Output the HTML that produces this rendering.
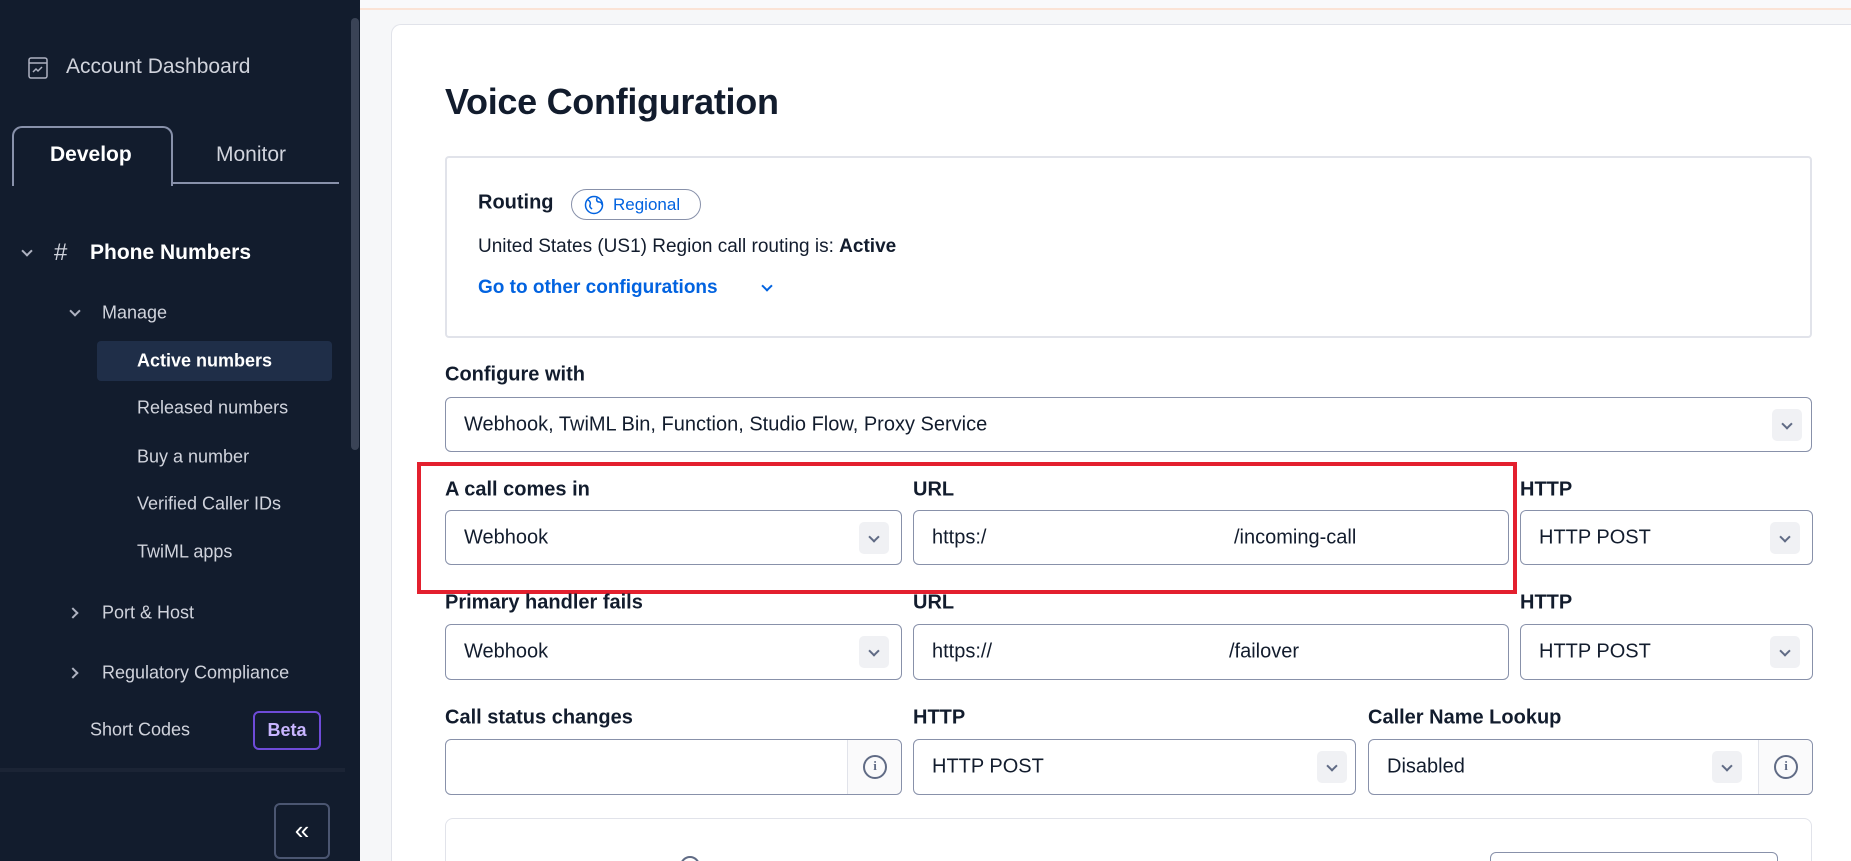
<!DOCTYPE html>
<html style="width:1851px;height:861px;overflow:hidden"><head><meta charset="utf-8"><style>
*{box-sizing:border-box;margin:0;padding:0}
body{width:1851px;height:861px;overflow:hidden;position:relative;background:#f6f7f9;font-family:"Liberation Sans",sans-serif;color:#121c2d}
.a{position:absolute}
#sb{left:0;top:0;width:360px;height:861px;background:#121c2d;color:#e1e3ea}
.t{position:absolute;white-space:nowrap;transform:translateY(-50%)}
.lbl{font-size:20px;font-weight:700}
.box{position:absolute;background:#fff;border:1px solid #8891aa;border-radius:6px}
.box .v{position:absolute;left:18px;top:50%;transform:translateY(-50%);font-size:20px;white-space:nowrap}
.chev{position:absolute;width:30px;height:32px;top:50%;transform:translateY(-50%);background:#f0f1f4;border-radius:5px}
.chev:after{content:"";position:absolute;left:11px;top:11px;width:6px;height:6px;border-right:2px solid #606b85;border-bottom:2px solid #606b85;transform:rotate(45deg)}
.info{position:absolute;right:0;top:0;bottom:0;width:54px;border-left:1px solid #e1e3ea;background:#fafafb;border-radius:0 6px 6px 0}
.info:after{content:"i";position:absolute;left:15px;top:50%;transform:translateY(-50%);width:20px;height:20px;border:2px solid #606b85;border-radius:50%;font-size:13px;font-weight:700;text-align:center;line-height:17px;color:#606b85;font-family:"Liberation Serif",serif}
.sc{position:absolute;width:8px;height:8px;border-right:2px solid #aeb2c1;border-bottom:2px solid #aeb2c1}
</style></head><body>
<div class="a" style="left:360px;top:0;width:1491px;height:10px;background:#f9f9fb;border-bottom:2px solid #fbe3d6"></div>
<div class="a" style="left:391px;top:24px;width:1480px;height:837px;background:#fff;border:1px solid #e1e3ea;border-bottom:none;border-radius:10px 10px 0 0"></div>

<div id="sb" class="a">
 <div class="a" style="left:351px;top:18px;width:8px;height:432px;background:#3a4356;border-radius:4px"></div>
 <svg class="a" style="left:28px;top:57px" width="20" height="22" viewBox="0 0 20 22" fill="none" stroke="#aeb2c1" stroke-width="1.5"><rect x="1" y="1" width="18" height="20" rx="2"/><line x1="1" y1="6" x2="19" y2="6"/><path d="M5 15l3-3 2 2 4-4"/></svg>
 <div class="t" style="left:66px;top:67px;font-size:21px;color:#d0d3dc">Account Dashboard</div>
 <div class="a" style="left:12px;top:126px;width:161px;height:60px;border:2px solid #8891aa;border-bottom:none;border-radius:10px 10px 0 0"></div>
 <div class="a" style="left:172px;top:182px;width:167px;height:2px;background:#8891aa"></div>
 <div class="t" style="left:50px;top:155px;font-size:21px;font-weight:700;color:#fff">Develop</div>
 <div class="t" style="left:216px;top:155px;font-size:21px;color:#d0d3dc">Monitor</div>
 <div class="sc" style="left:23px;top:247px;transform:rotate(45deg)"></div>
 <div class="t" style="left:54px;top:253px;font-size:24px;color:#d0d3dc">#</div>
 <div class="t" style="left:90px;top:253px;font-size:21px;font-weight:700;color:#fff">Phone Numbers</div>
 <div class="sc" style="left:71px;top:307px;transform:rotate(45deg)"></div>
 <div class="t" style="left:102px;top:313px;font-size:18px;color:#d0d3dc">Manage</div>
 <div class="a" style="left:97px;top:341px;width:235px;height:40px;background:#1f2e48;border-radius:4px"></div>
 <div class="t" style="left:137px;top:361px;font-size:18px;font-weight:700;color:#fff">Active numbers</div>
 <div class="t" style="left:137px;top:408px;font-size:18px;color:#d0d3dc">Released numbers</div>
 <div class="t" style="left:137px;top:457px;font-size:18px;color:#d0d3dc">Buy a number</div>
 <div class="t" style="left:137px;top:504px;font-size:18px;color:#d0d3dc">Verified Caller IDs</div>
 <div class="t" style="left:137px;top:552px;font-size:18px;color:#d0d3dc">TwiML apps</div>
 <div class="sc" style="left:69px;top:609px;transform:rotate(-45deg)"></div>
 <div class="t" style="left:102px;top:613px;font-size:18px;color:#d0d3dc">Port &amp; Host</div>
 <div class="sc" style="left:69px;top:669px;transform:rotate(-45deg)"></div>
 <div class="t" style="left:102px;top:673px;font-size:18px;color:#d0d3dc">Regulatory Compliance</div>
 <div class="t" style="left:90px;top:730px;font-size:18px;color:#d0d3dc">Short Codes</div>
 <div class="a" style="left:253px;top:711px;width:68px;height:39px;border:2px solid #6e4bd8;border-radius:6px;color:#c8b5ff;font-size:18px;font-weight:700;text-align:center;line-height:35px">Beta</div>
 <div class="a" style="left:0;top:768px;width:345px;height:4px;background:#1b2435"></div>
 <div class="a" style="left:274px;top:803px;width:56px;height:56px;border:2px solid #4b5671;border-radius:6px;color:#fff;font-size:26px;text-align:center;line-height:50px">&laquo;</div>
</div>

<div class="t" style="left:445px;top:102px;font-size:36px;font-weight:700;letter-spacing:-0.3px">Voice Configuration</div>

<div class="a" style="left:445px;top:156px;width:1367px;height:182px;border:2px solid #e1e3ea;border-radius:4px"></div>
<div class="t" style="left:478px;top:203px;font-size:20px;font-weight:700">Routing</div>
<div class="a" style="left:571px;top:189px;width:130px;height:31px;border:1px solid #8891aa;border-radius:16px"></div>
<svg class="a" style="left:584px;top:195px" width="20" height="20" viewBox="0 0 20 20" fill="none" stroke="#0263e0" stroke-width="1.5"><circle cx="10" cy="10" r="8.5"/><path d="M4 5c2 1 3 3 2 5s1 3 2 4M13 3c-1 2 0 4 2 4s3 1 3 3"/></svg>
<div class="t" style="left:613px;top:205px;font-size:17px;color:#0263e0">Regional</div>
<div class="t" style="left:478px;top:247px;font-size:19px">United States (US1) Region call routing is: <b>Active</b></div>
<div class="t" style="left:478px;top:288px;font-size:19px;font-weight:700;color:#0263e0">Go to other configurations</div>
<div class="a" style="left:763px;top:282px;width:8px;height:8px;border-right:2px solid #0263e0;border-bottom:2px solid #0263e0;transform:rotate(45deg)"></div>

<div class="t lbl" style="left:445px;top:375px">Configure with</div>
<div class="box" style="left:445px;top:397px;width:1367px;height:55px"><div class="v">Webhook, TwiML Bin, Function, Studio Flow, Proxy Service</div><div class="chev" style="right:9px"></div></div>

<div class="t lbl" style="left:445px;top:490px">A call comes in</div>
<div class="t lbl" style="left:913px;top:490px">URL</div>
<div class="t lbl" style="left:1520px;top:490px">HTTP</div>
<div class="box" style="left:445px;top:510px;width:457px;height:55px"><div class="v">Webhook</div><div class="chev" style="right:12px"></div></div>
<div class="box" style="left:913px;top:510px;width:596px;height:55px"><div class="v">https:/</div><div class="v" style="left:320px">/incoming-call</div></div>
<div class="box" style="left:1520px;top:510px;width:293px;height:55px"><div class="v">HTTP POST</div><div class="chev" style="right:12px"></div></div>
<div class="a" style="left:417px;top:462px;width:1100px;height:132px;border:4px solid #e3202e"></div>

<div class="t lbl" style="left:445px;top:603px">Primary handler fails</div>
<div class="t lbl" style="left:913px;top:603px">URL</div>
<div class="t lbl" style="left:1520px;top:603px">HTTP</div>
<div class="box" style="left:445px;top:624px;width:457px;height:56px"><div class="v">Webhook</div><div class="chev" style="right:12px"></div></div>
<div class="box" style="left:913px;top:624px;width:596px;height:56px"><div class="v">https://</div><div class="v" style="left:315px">/failover</div></div>
<div class="box" style="left:1520px;top:624px;width:293px;height:56px"><div class="v">HTTP POST</div><div class="chev" style="right:12px"></div></div>

<div class="t lbl" style="left:445px;top:718px">Call status changes</div>
<div class="t lbl" style="left:913px;top:718px">HTTP</div>
<div class="t lbl" style="left:1368px;top:718px">Caller Name Lookup</div>
<div class="box" style="left:445px;top:739px;width:457px;height:56px"><div class="info"></div></div>
<div class="box" style="left:913px;top:739px;width:443px;height:56px"><div class="v">HTTP POST</div><div class="chev" style="right:8px"></div></div>
<div class="box" style="left:1368px;top:739px;width:445px;height:56px"><div class="v">Disabled</div><div class="chev" style="right:70px"></div><div class="info"></div></div>

<div class="a" style="left:445px;top:818px;width:1367px;height:60px;border:1px solid #e1e3ea;border-radius:8px"></div>
<div class="a" style="left:680px;top:856px;width:20px;height:20px;border:2px solid #606b85;border-radius:50%"></div>
<div class="a" style="left:1490px;top:852px;width:288px;height:30px;border:1px solid #8891aa;border-radius:6px"></div>
</body></html>
